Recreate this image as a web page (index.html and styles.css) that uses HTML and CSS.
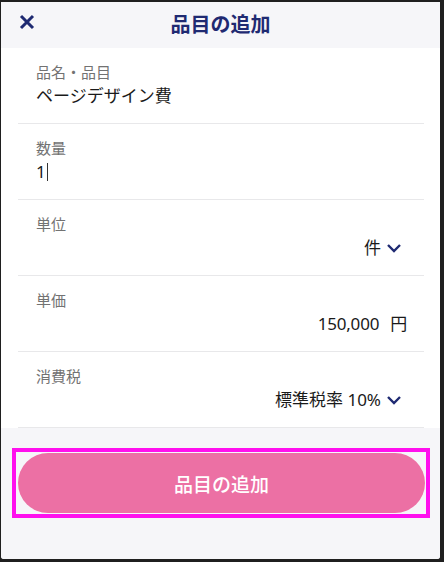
FILE: index.html
```html
<!DOCTYPE html>
<html lang="ja">
<head>
<meta charset="utf-8">
<title>品目の追加</title>
<link rel="stylesheet" href="styles.css">
</head>
<body>
<div class="window">
  <header class="header">
    <button class="close" aria-label="閉じる">
      <svg width="16" height="16" viewBox="0 0 16 16"><path d="M2 2 L14 14 M14 2 L2 14" stroke="#1f2a72" stroke-width="3" stroke-linecap="butt" fill="none"/></svg>
    </button>
    <h1 class="title">品目の追加</h1>
  </header>
  <main class="form">
    <div class="row">
      <div class="label">品名・品目</div>
      <div class="value">ページデザイン費</div>
    </div>
    <div class="row">
      <div class="label">数量</div>
      <div class="value">1<span class="caret"></span></div>
    </div>
    <div class="row">
      <div class="label">単位</div>
      <div class="value right">件<svg class="chev" width="16" height="10" viewBox="0 0 16 10"><path d="M2 2 L8 8 L14 2" stroke="#1f2a72" stroke-width="2.4" fill="none"/></svg></div>
    </div>
    <div class="row">
      <div class="label">単価</div>
      <div class="value right yen">150,000<span class="unit">円</span></div>
    </div>
    <div class="row">
      <div class="label">消費税</div>
      <div class="value right">標準税率 10%<svg class="chev" width="16" height="10" viewBox="0 0 16 10"><path d="M2 2 L8 8 L14 2" stroke="#1f2a72" stroke-width="2.4" fill="none"/></svg></div>
    </div>
  </main>
  <footer class="footer">
    <div class="highlight">
      <button class="submit">品目の追加</button>
    </div>
  </footer>
</div>
</body>
</html>
```
FILE: styles.css
```css
html, body {
  margin: 0;
  padding: 0;
  background: #1f1f1f;
}
body {
  width: 444px;
  height: 562px;
  overflow: hidden;
  font-family: "Noto Sans", "Noto Sans CJK JP", sans-serif;
}
.window {
  margin: 2px 4px 0 1px;
  height: 557px;
  background: #f6f6f9;
  border-radius: 0 0 3px 3px;
  display: flex;
  flex-direction: column;
  overflow: hidden;
}
.header {
  height: 46px;
  background: #f6f6f9;
  display: flex;
  align-items: center;
  justify-content: center;
  position: relative;
}
.close {
  position: absolute;
  left: 18px;
  top: 12px;
  background: none;
  border: 0;
  padding: 0;
  width: 16px;
  height: 16px;
  display: block;
}
.close svg { display: block; }
.title {
  margin: 0;
  font-family: "Noto Sans CJK JP", sans-serif;
  font-size: 20px;
  font-weight: 700;
  color: #1f2a72;
  line-height: 1;
  margin-top: -3px;
}
.form {
  background: #fff;
  padding: 0 16px 0 17px;
}
.row {
  border-bottom: 1px solid #e8e8ea;
  padding: 13px 0 0 18px;
  box-sizing: border-box;
  height: 76px;
}
.label {
  font-family: "Noto Sans CJK JP", sans-serif;
  font-size: 15px;
  line-height: 21px;
  color: #727272;
}
.value {
  font-family: "Noto Sans", "Noto Sans CJK JP", sans-serif;
  font-size: 17px;
  line-height: 24px;
  color: #1a1a1a;
  margin-top: 2px;
  display: flex;
  align-items: center;
}
.value.right {
  justify-content: flex-end;
  padding-right: 22px;
}
.value.yen {
  padding-right: 17px;
  letter-spacing: -0.2px;
}
.unit {
  margin-left: 11px;
}
.caret {
  display: inline-block;
  width: 1px;
  height: 18px;
  background: #333;
  margin-left: 1px;
}
.chev {
  margin-left: 5px;
  display: block;
}
.footer {
  flex: 1;
  background: #f6f6f9;
  padding: 20px 10px 0 11px;
}
.highlight {
  border: 4px solid #ff10ee;
  padding: 1px 1px 1px 2px;
}
.submit {
  display: block;
  width: 100%;
  height: 60px;
  border: 0;
  border-radius: 30px;
  background: #ec70a4;
  color: #fff;
  font-family: "Noto Sans CJK JP", sans-serif;
  font-size: 19px;
  font-weight: 500;
  padding: 0;
}
```
